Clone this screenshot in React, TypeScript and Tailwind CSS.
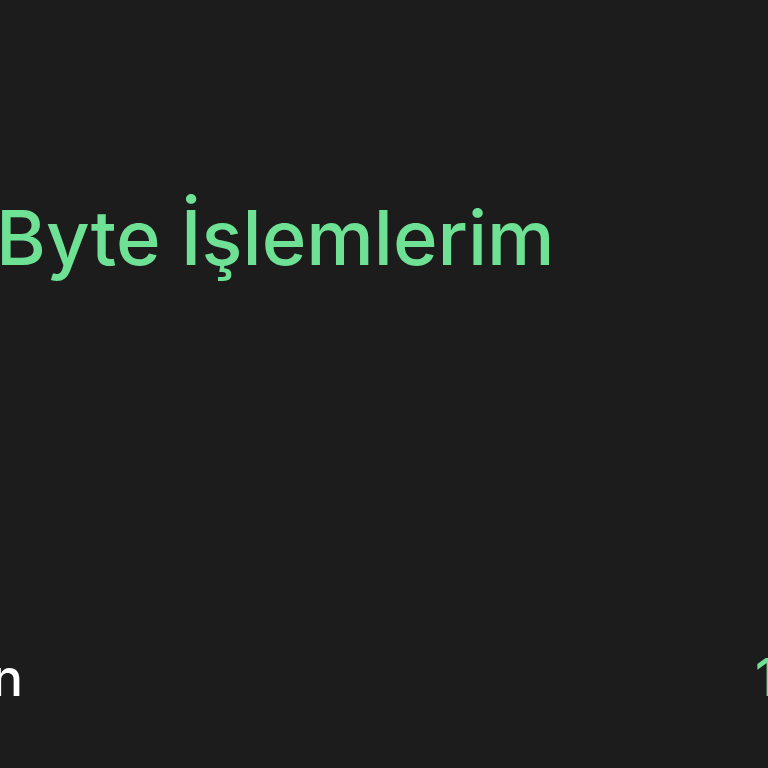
import React from 'react';

const App: React.FC = () => {
  return (
    <div className="w-[768px] h-[768px] overflow-hidden bg-[#1c1c1c] font-['Inter','Noto_Sans',sans-serif]">
      {/* Başlık */}
      <div className="pt-[199px] -ml-[4px]">
        <h1 className="text-[76px] leading-none font-medium text-[#6fe195] whitespace-nowrap">
          Byte İşlemlerim
        </h1>
      </div>

      {/* Satır: etiket / değer */}
      <div className="mt-[377px] flex justify-between items-baseline text-[52px] leading-none font-medium">
        <div className="w-[23px] flex justify-end">
          <span className="whitespace-nowrap text-white">Kazanılan</span>
        </div>
        <div className="w-[13px] flex">
          <span className="whitespace-nowrap text-[#6fe195]">1.250</span>
        </div>
      </div>
    </div>
  );
};

export default App;
